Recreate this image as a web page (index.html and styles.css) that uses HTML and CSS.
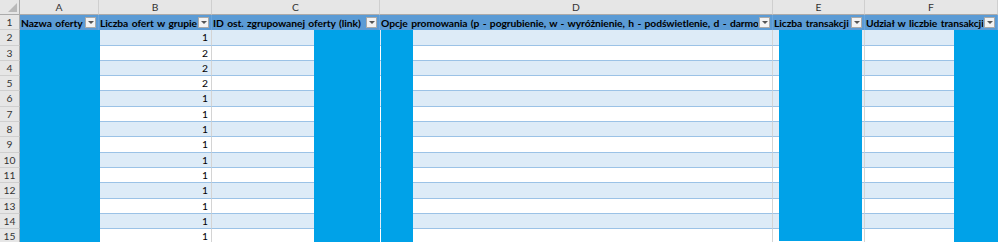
FILE: index.html
```html
<!DOCTYPE html>
<html lang="pl">
<head>
<meta charset="utf-8">
<link rel="stylesheet" href="styles.css">
</head>
<body>
<div class="sheet">
  <div class="row colhdr">
    <div class="corner"><span class="tri"></span></div>
    <div class="ch">A</div>
    <div class="ch">B</div>
    <div class="ch">C</div>
    <div class="ch">D</div>
    <div class="ch">E</div>
    <div class="ch">F</div>
  </div>
  <div class="row thead">
    <div class="rh">1</div>
    <div class="th"><span class="tt">Nazwa oferty</span><span class="dd"></span></div>
    <div class="th"><span class="tt">Liczba ofert w grupie</span><span class="dd"></span></div>
    <div class="th"><span class="tt">ID ost. zgrupowanej oferty (link)</span><span class="dd"></span></div>
    <div class="th"><span class="tt">Opcje promowania (p - pogrubienie, w - wyróżnienie, h - podświetlenie, d - darmowa dostawa)</span><span class="dd"></span></div>
    <div class="th"><span class="tt">Liczba transakcji</span><span class="dd"></span></div>
    <div class="th"><span class="tt">Udział w liczbie transakcji</span><span class="dd"></span></div>
  </div>
  <div class="row band"><div class="rh">2</div><div class="td"></div><div class="td num">1</div><div class="td"></div><div class="td"></div><div class="td"></div><div class="td"></div></div>
  <div class="row"><div class="rh">3</div><div class="td"></div><div class="td num">2</div><div class="td"></div><div class="td"></div><div class="td"></div><div class="td"></div></div>
  <div class="row band"><div class="rh">4</div><div class="td"></div><div class="td num">2</div><div class="td"></div><div class="td"></div><div class="td"></div><div class="td"></div></div>
  <div class="row"><div class="rh">5</div><div class="td"></div><div class="td num">2</div><div class="td"></div><div class="td"></div><div class="td"></div><div class="td"></div></div>
  <div class="row band"><div class="rh">6</div><div class="td"></div><div class="td num">1</div><div class="td"></div><div class="td"></div><div class="td"></div><div class="td"></div></div>
  <div class="row"><div class="rh">7</div><div class="td"></div><div class="td num">1</div><div class="td"></div><div class="td"></div><div class="td"></div><div class="td"></div></div>
  <div class="row band"><div class="rh">8</div><div class="td"></div><div class="td num">1</div><div class="td"></div><div class="td"></div><div class="td"></div><div class="td"></div></div>
  <div class="row"><div class="rh">9</div><div class="td"></div><div class="td num">1</div><div class="td"></div><div class="td"></div><div class="td"></div><div class="td"></div></div>
  <div class="row band"><div class="rh">10</div><div class="td"></div><div class="td num">1</div><div class="td"></div><div class="td"></div><div class="td"></div><div class="td"></div></div>
  <div class="row"><div class="rh">11</div><div class="td"></div><div class="td num">1</div><div class="td"></div><div class="td"></div><div class="td"></div><div class="td"></div></div>
  <div class="row band"><div class="rh">12</div><div class="td"></div><div class="td num">1</div><div class="td"></div><div class="td"></div><div class="td"></div><div class="td"></div></div>
  <div class="row"><div class="rh">13</div><div class="td"></div><div class="td num">1</div><div class="td"></div><div class="td"></div><div class="td"></div><div class="td"></div></div>
  <div class="row band"><div class="rh">14</div><div class="td"></div><div class="td num">1</div><div class="td"></div><div class="td"></div><div class="td"></div><div class="td"></div></div>
  <div class="row"><div class="rh">15</div><div class="td"></div><div class="td num">1</div><div class="td"></div><div class="td"></div><div class="td"></div><div class="td"></div></div>

  <div class="redact r-a"></div>
  <div class="redact r-c"></div>
  <div class="redact r-d"></div>
  <div class="redact r-e"></div>
  <div class="redact r-f"></div>
</div>
</body>
</html>
```
FILE: styles.css
```css
html, body {
  margin: 0;
  padding: 0;
  background: #ffffff;
}
body {
  font-family: "Lato", "Liberation Sans", sans-serif;
  font-size: 10.3px;
  color: #000;
}
.sheet {
  position: relative;
  width: 998px;
  height: 242px;
  overflow: hidden;
}
.row {
  display: grid;
  grid-template-columns: 20px 79px 113px 168px 393px 92px 133px;
  height: 15.3px;
  box-sizing: border-box;
}
.row > div {
  box-sizing: border-box;
  overflow: hidden;
  white-space: nowrap;
}
.colhdr {
  height: 15px;
}
.colhdr > div {
  background: #e6e6e6;
  border-right: 1px solid #cfcfcf;
  border-bottom: 1px solid #ababab;
  color: #333;
  text-align: center;
  line-height: 14px;
}
.colhdr > .corner {
  position: relative;
  border-right: 1px solid #ababab;
}
.tri {
  position: absolute;
  right: 2px;
  bottom: 2px;
  width: 0;
  height: 0;
  border-left: 9px solid transparent;
  border-bottom: 9px solid #b9b9b9;
}
.rh {
  background: #e6e6e6;
  border-right: 1px solid #ababab;
  border-bottom: 1px solid #cfcfcf;
  color: #333;
  text-align: center;
  line-height: 14px;
}
.th {
  background: #5b9bd5;
  border-right: 1px solid #6aa5dc;
  display: flex;
  align-items: center;
  padding: 0 2px 0 1px;
  font-weight: 700;
  letter-spacing: -0.08px;
  word-spacing: 1px;
}
.tt {
  flex: 1;
  min-width: 0;
  overflow: hidden;
  white-space: nowrap;
}
.dd {
  flex: none;
  width: 11px;
  height: 11px;
  box-sizing: border-box;
  margin-left: 1px;
  background: #f3f3f3;
  border: 1px solid #a9a9a9;
  position: relative;
}
.dd::after {
  content: "";
  position: absolute;
  left: 2px;
  top: 3px;
  border-left: 3px solid transparent;
  border-right: 3px solid transparent;
  border-top: 3px solid #555;
}
.td {
  background: #ffffff;
  border-right: 1px solid #d4d4d4;
  border-bottom: 1px solid #9bc2e6;
  line-height: 14px;
  padding: 0 3px;
}
.band .td {
  background: #ddebf7;
}
.num {
  text-align: right;
}
.redact {
  position: absolute;
  top: 30px;
  bottom: 0;
  background: #00a2e8;
}
.r-a { left: 20px; width: 80px; }
.r-c { left: 314px; width: 66px; }
.r-d { left: 381px; width: 32px; }
.r-e { left: 779px; width: 83px; bottom: 1px; }
.r-f { left: 954px; width: 44px; }
```
